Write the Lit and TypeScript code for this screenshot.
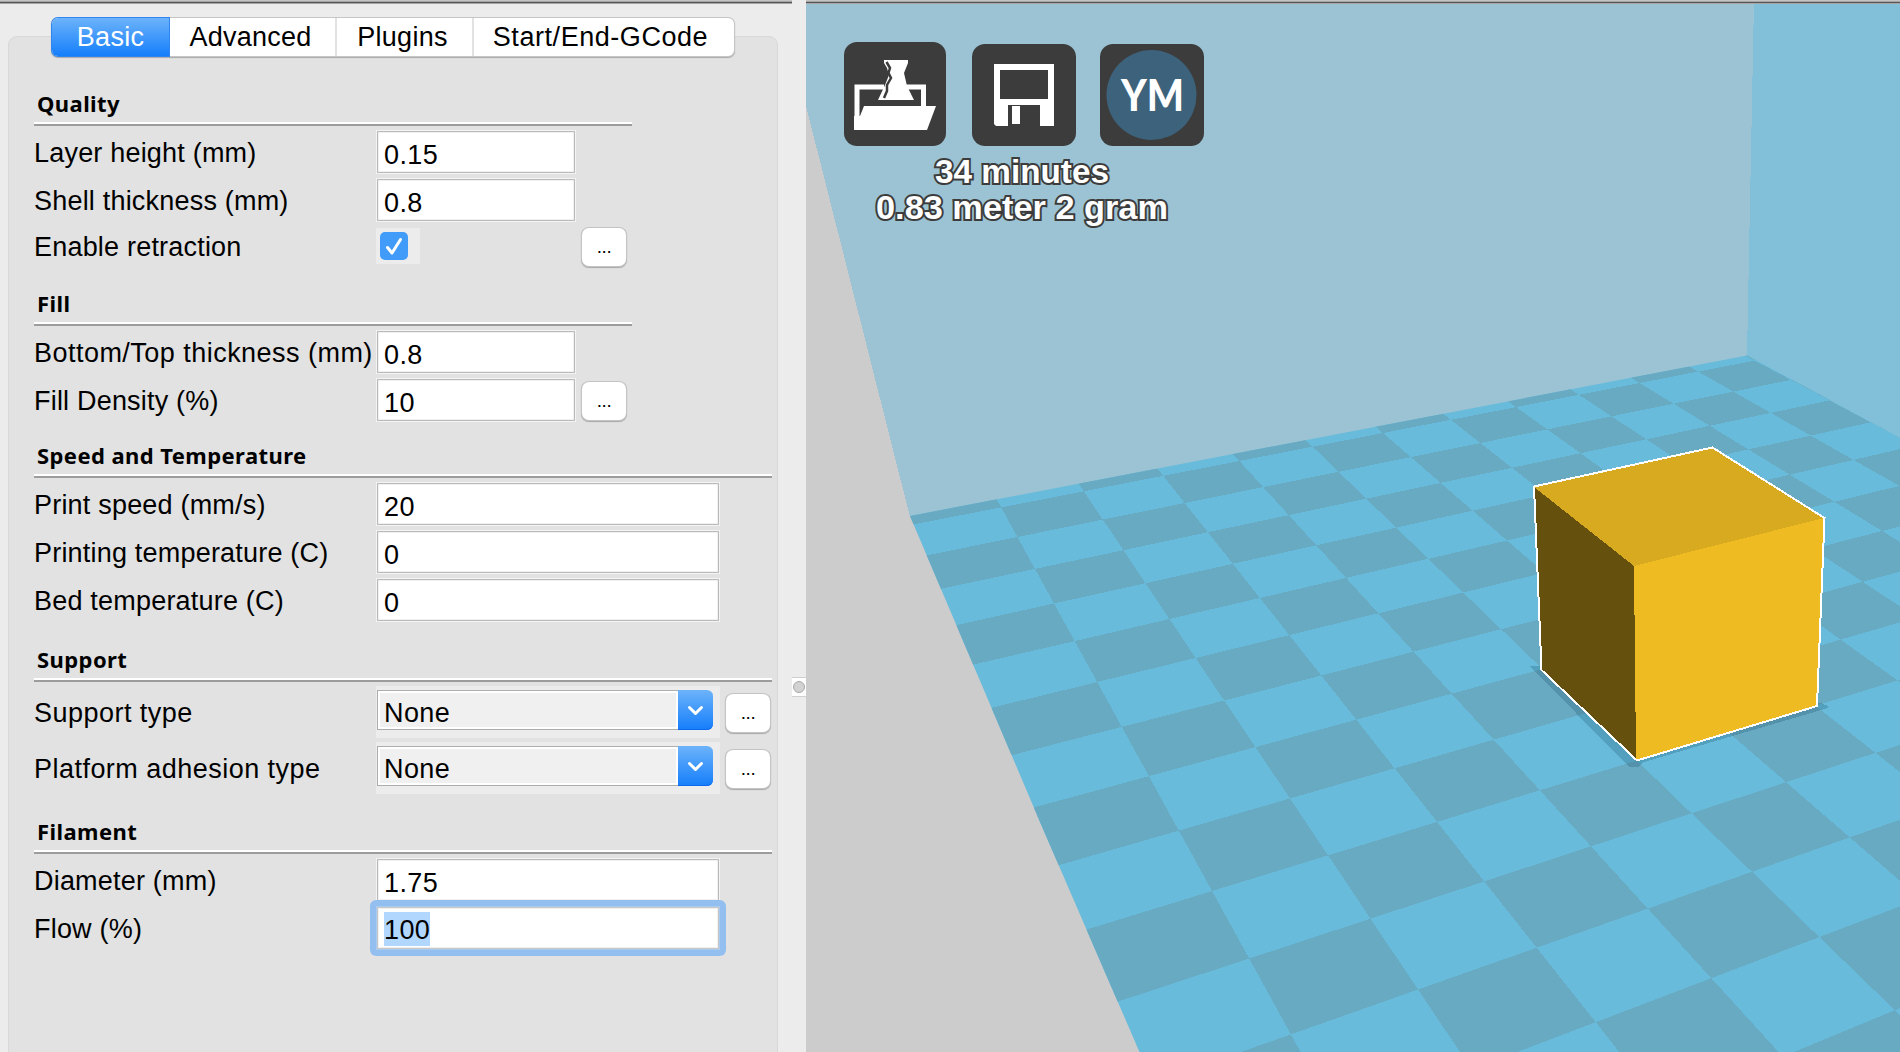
import { LitElement, html, svg, css } from "lit";
import { customElement, property } from "lit/decorators.js";

type Pt = [number, number];

/* Anchors of the build plate: grid column, grid row, viewport x, viewport y. */
const ANCHORS: number[][] = [
  [1, 1, 1001, 507.3], [3, 1, 1163.7, 475.7], [5, 1, 1313.3, 446.7], [7, 1, 1451, 419.3],
  [9, 1, 1578.3, 394.3], [11, 1, 1697.7, 371.7], [11, 3, 1770.7, 413.3], [10, 6, 1833.3, 502],
  [11, 5, 1855, 460.3], [7, 3, 1511.7, 467.7], [1, 4, 1053.3, 604], [3, 5, 1259, 598.7],
  [1, 7, 1121.9, 726.7], [2, 8, 1255.6, 747.3], [1, 9, 1179.9, 830.7], [1, 12, 1289.6, 1034],
  [3, 9, 1395.4, 768.3], [3, 13, 1595.6, 1022.3], [4, 11, 1591.2, 845.7], [5, 12, 1750.8, 872],
  [5, 14, 1895.6, 1010.7], [6, 12, 1849, 837], [7, 11, 1876.4, 752.3], [4, 6, 1379, 613.3],
];

/* Least squares fit of the plane-to-screen projection. */
function fitProjection(points: number[][]): number[] {
  const n = 8;
  const m = Array.from({ length: n }, () => new Array(n + 1).fill(0));
  const add = (row: number[], rhs: number) => {
    for (let a = 0; a < n; a++) {
      for (let b = 0; b < n; b++) m[a][b] += row[a] * row[b];
      m[a][n] += row[a] * rhs;
    }
  };
  for (const [ui, vi, xi, yi] of points) {
    const u = ui / 10, v = vi / 10, x = xi / 1000, y = yi / 1000;
    add([u, v, 1, 0, 0, 0, -u * x, -v * x], x);
    add([0, 0, 0, u, v, 1, -u * y, -v * y], y);
  }
  for (let c = 0; c < n; c++) {
    let p = c;
    for (let r = c + 1; r < n; r++) if (Math.abs(m[r][c]) > Math.abs(m[p][c])) p = r;
    [m[c], m[p]] = [m[p], m[c]];
    for (let r = 0; r < n; r++) {
      if (r === c) continue;
      const f = m[r][c] / m[c][c];
      for (let k = c; k <= n; k++) m[r][k] -= f * m[c][k];
    }
  }
  return m.map((r, i) => r[n] / r[i]);
}

const H = fitProjection(ANCHORS);
const project = (i: number, j: number): Pt => {
  const u = i / 10, v = j / 10;
  const w = H[6] * u + H[7] * v + 1;
  return [(1000 * (H[0] * u + H[1] * v + H[2])) / w, (1000 * (H[3] * u + H[4] * v + H[5])) / w];
};

function darkTiles(): string {
  let d = "";
  for (let i = 0; i < 14; i++) {
    for (let j = 0; j < 16; j++) {
      if ((i + j) % 2) continue;
      /* the outermost column runs on under the plate's clipped edge */
      const left = i === 0 ? -0.2 : i;
      const q = [project(left, j), project(i + 1, j), project(i + 1, j + 1), project(left, j + 1)];
      d += "M" + q.map((p) => p[0].toFixed(1) + " " + p[1].toFixed(1)).join("L") + "Z";
    }
  }
  return d;
}

@customElement("build-view")
class BuildView extends LitElement {
  static styles = css`
    :host { display: grid; overflow: hidden; }
    .scene, .overlay { grid-area: 1 / 1; }
    .scene { display: block; width: 1094px; height: 1052px; }
    .overlay { display: flex; flex-direction: column; align-items: flex-start; padding: 42px 0 0 38px; z-index: 1; }
    .tools { display: flex; align-items: flex-end; }
    .tool { display: block; }
    .first { margin-right: 26px; }
    .second { margin-right: 24px; }
    .stats { display: block; margin-top: 6px; }
    .stat { font: bold 34px "Liberation Sans", Arial, sans-serif; fill: #fff; stroke: #3c3c3c; stroke-width: 4px; paint-order: stroke; stroke-linejoin: miter; stroke-miterlimit: 2; }
    .logo { font: 900 43.5px Lato, sans-serif; fill: #fff; }
  `;
  render() {
    return html`
      <svg class="scene" viewBox="806 0 1094 1052" shape-rendering="crispEdges">
        <defs><clipPath id="plate"><path d="M910 516L1747 355.5L1900 438V1052H1139.5L1040 822Z"/></clipPath></defs>
        <path fill="#cccccc" d="M806 0H1900V1052H806Z"/>
        <path fill="#9bc3d3" d="M806 0H1754L1747 356L910 517L806 106Z"/>
        <path fill="#82c0d9" d="M1754 0H1900V439L1747 356Z"/>
        <g clip-path="url(#plate)">
          <path fill="#68bbda" d="M806 300H1900V1052H806Z"/>
          ${svg`<path fill="#69aac3" d=${darkTiles()}/>`}
        </g>
        <path fill="#003050" fill-opacity=".2" d="M1530 666H1542L1638 756L1818 702L1828 706V708L1644 762L1638 767H1629L1622 760Z"/>
        <path fill="#d7aa20" d="M1534 487L1712.5 448L1824 518L1634 566Z"/>
        <path fill="#65500e" d="M1534 487L1634 566L1636 760L1541.5 670Z"/>
        <path fill="#eebb22" d="M1634 566L1824 518L1817 706L1636 760Z"/>
        <path fill="none" stroke="#fff" stroke-width="2" d="M1534 486.5L1712.5 447.5L1824.5 518L1817 706L1637 760.5L1541.5 670Z"/>
        <path fill="#c4c4c4" d="M806 0H1900V1H806Z"/>
        <path fill="#a6a6a6" d="M806 1H1900V4H806Z"/>
        <path fill="#555555" d="M806 2H1900V3H806Z"/>
      </svg>
      <div class="overlay">
        <div class="tools">
          <svg class="tool first" width="102" height="104" viewBox="0 0 102 104">
            <rect width="102" height="104" rx="13" fill="#3c3c3c"/>
            <path fill="none" stroke="#fff" stroke-width="5" d="M13 80V45H79.500V66"/>
            <path fill="#3c3c3c" d="M40 42H62V48H40Z"/>
            <path fill="#fff" d="M40 18H64V21L60 31L63 44L70 58H34L41 43L45 33L43 26L40 21Z"/>
            <path fill="none" stroke="#3c3c3c" stroke-width="2.500" d="M42.500 20L46 26L44.500 31L47 36L43 43L43 49L40 56"/>
            <path fill="#fff" d="M20 64H92L83 88H10V74H16Z"/>
          </svg>
          <svg class="tool second" width="104" height="102" viewBox="0 0 104 102">
            <rect width="104" height="102" rx="13" fill="#3c3c3c"/>
            <path fill="#fff" fill-rule="evenodd" d="M22 20H82V82H68V61H36V82H24L22 80ZM28 26V55H76V26Z"/>
            <path fill="#fff" d="M40 62H48V80H40Z"/>
          </svg>
          <svg class="tool" width="104" height="102" viewBox="0 0 104 102">
            <rect width="104" height="102" rx="13" fill="#3c3c3c"/>
            <circle cx="51.500" cy="51" r="45" fill="#3d627b"/>
            <text class="logo" x="21" y="67" textLength="63" lengthAdjust="spacingAndGlyphs">YM</text>
          </svg>
        </div>
        <svg class="stats" width="360" height="90" viewBox="844 152 360 90">
          <text class="stat" x="935" y="182.500" textLength="174" lengthAdjust="spacingAndGlyphs">34 minutes</text>
          <text class="stat" x="876" y="219" textLength="292" lengthAdjust="spacingAndGlyphs">0.83 meter 2 gram</text>
        </svg>
      </div>`;
  }
}

type Row = { label: string; kind: "text" | "check" | "combo"; value?: string; more?: boolean; focus?: boolean; loose?: boolean };

@customElement("settings-section")
class SettingsSection extends LitElement {
  @property() heading = "";
  @property({ attribute: false }) rows: Row[] = [];
  static styles = css`
    :host { display: block; }
    .heading { box-sizing: border-box; display: flex; align-items: flex-end; height: 34px; padding: 0 0 4px 3px; font: bold 22px/30px "Noto Sans", "Open Sans", sans-serif; letter-spacing: 0.42px; }
    .rule { height: 2px; background: #9c9c9c; border-top: 2px solid #fff; }
    .rows { display: grid; gap: 4px; padding-top: 4px; }
    .row { display: grid; grid-template-columns: 342px var(--field) auto; height: 44px; align-items: center; letter-spacing: 0.4px; }
    .row.check { height: 40px; }
    .row.combo { height: 52px; }
    .label { padding: 2px 0 0 0; white-space: nowrap; letter-spacing: 0.2px; }
    .label.loose { letter-spacing: 0.47px; }
    .field { box-sizing: border-box; height: 44px; border: 1px solid #f4f4f4; display: flex; }
    .inner { box-sizing: border-box; flex: 1; border: 1px solid #bababa; background: #fff; box-shadow: inset 0 0 0 1px #f0f0f0; padding: 5px 0 0 6px; line-height: 36px; }
    .focus { position: relative; border-color: #a8cbf2; box-shadow: 0 0 0 6px #92bef0; border-radius: 2px; }
    .focus .inner { border-color: #c6c6c6; }
    .sel { display: inline-block; height: 34px; line-height: 36px; margin-top: -1px; background: #b2d7fe; vertical-align: top; }
    .checkbg { box-sizing: border-box; width: 44px; height: 36px; background: #ececec; padding: 4px; }
    .icon { display: block; }
    .combobg { box-sizing: border-box; height: 52px; background: #ececec; padding: 4px 7px 8px 1px; display: flex; }
    .combo-text { box-sizing: border-box; flex: 1; border: 1px solid #adadad; border-right: 0; background: #f0f0f0; box-shadow: inset 0 0 0 2px #fff; padding: 3px 0 0 6px; line-height: 38px; }
    .drop { width: 35px; height: 40px; border-radius: 0 6px 6px 0; background: linear-gradient(#6cb3fa, #157efb); box-shadow: inset 0 -1px 0 #0d68f0; }
    .more { box-sizing: border-box; width: 44px; height: 38px; margin: 2px 0 0 6px; border-radius: 7px; background: #fff; box-shadow: 0 0 0 1px #c4c4c4, 0 1px 1px 1px #a8a8a8; text-align: center; font-size: 19px; line-height: 37px; letter-spacing: -0.5px; }
  `;
  private control(r: Row) {
    if (r.kind === "check")
      return html`<div class="checkbg"><svg class="icon" width="28" height="28"><rect width="28" height="28" rx="5" fill="#419bf9"/><path d="M7.500 15.500L12 21L20.500 7.500" fill="none" stroke="#fff" stroke-width="3" stroke-linecap="round" stroke-linejoin="round"/></svg></div>`;
    if (r.kind === "combo")
      return html`<div class="combobg"><div class="combo-text">${r.value}</div><div class="drop"><svg class="icon" width="35" height="40"><path d="M11.500 17.500L17.500 23.500L23.500 17.500" fill="none" stroke="#fff" stroke-width="3" stroke-linecap="round" stroke-linejoin="round"/></svg></div></div>`;
    return html`<div class="field ${r.focus ? "focus" : ""}"><div class="inner">${r.focus ? html`<span class="sel">${r.value}</span>` : r.value}</div></div>`;
  }
  render() {
    return html`
      <div class="heading">${this.heading}</div>
      <div class="rule"></div>
      <div class="rows">
        ${this.rows.map((r) => html`<div class="row ${r.kind}"><div class="label ${r.loose ? "loose" : ""}">${r.label}</div>${this.control(r)}${r.more ? html`<div class="more">...</div>` : ""}</div>`)}
      </div>`;
  }
}

const SECTIONS: { name: string; cls: string; rows: Row[] }[] = [
  { name: "Quality", cls: "narrow", rows: [
    { label: "Layer height (mm)", kind: "text", value: "0.15" },
    { label: "Shell thickness (mm)", kind: "text", value: "0.8" },
    { label: "Enable retraction", kind: "check", more: true } ] },
  { name: "Fill", cls: "narrow spaced", rows: [
    { label: "Bottom/Top thickness (mm)", kind: "text", value: "0.8", loose: true },
    { label: "Fill Density (%)", kind: "text", value: "10", more: true } ] },
  { name: "Speed and Temperature", cls: "wide tight", rows: [
    { label: "Print speed (mm/s)", kind: "text", value: "20" },
    { label: "Printing temperature (C)", kind: "text", value: "0" },
    { label: "Bed temperature (C)", kind: "text", value: "0" } ] },
  { name: "Support", cls: "wide spaced", rows: [
    { label: "Support type", kind: "combo", value: "None", more: true, loose: true },
    { label: "Platform adhesion type", kind: "combo", value: "None", more: true, loose: true } ] },
  { name: "Filament", cls: "wide spaced", rows: [
    { label: "Diameter (mm)", kind: "text", value: "1.75" },
    { label: "Flow (%)", kind: "text", value: "100", focus: true } ] },
];

@customElement("app-root")
class AppRoot extends LitElement {
  static styles = css`
    :host { display: grid; grid-template-columns: 792px 14px 1094px; width: 1900px; height: 1052px; overflow: hidden; background: #ececec; color: #000; font: 27px "Liberation Sans", Arial, sans-serif; }
    .panel { height: 1052px; overflow: hidden; }
    .shade { height: 4px; background: linear-gradient(#c4c4c4 1px, #a6a6a6 1px 2px, #555 2px 3px, #a6a6a6 3px); }
    .tabs { position: relative; z-index: 1; display: flex; width: 682px; height: 38px; margin: 14px 0 0 52px; border-radius: 6px; background: #fff; box-shadow: 0 0 0 1px #c6c6c6, 0 1px 1px 1px #a9a9a9; line-height: 38px; letter-spacing: 0.25px; }
    .tab { box-sizing: border-box; text-align: center; border-left: 2px solid #e2e2e2; white-space: nowrap; }
    .tab.on { border: 0; border-radius: 6px 0 0 6px; color: #fff; background: linear-gradient(#6cb3fa, #157efb); box-shadow: 0 0 0 1px #2f86f0; width: 117px; }
    .adv { width: 166px; padding-right: 3px; border-left: 0; }
    .plug { width: 137px; padding-right: 4px; }
    .code { width: 262px; padding-right: 7px; letter-spacing: 0.55px; }
    .box { box-sizing: border-box; width: 770px; height: 1040px; margin: -20px 0 0 8px; padding: 51px 0 0 25px; border: 1px solid #d8d8d8; border-radius: 9px; background: #e2e2e2; }
    .narrow { width: 598px; --field: 200px; }
    .wide { width: 738px; --field: 344px; }
    .spaced { margin-top: 22px; }
    .tight { margin-top: 18px; }
    .sash { padding-top: 677px; }
    .knob { display: block; }
  `;
  render() {
    return html`
      <div class="panel">
        <div class="shade"></div>
        <div class="tabs"><div class="tab on">Basic</div><div class="tab adv">Advanced</div><div class="tab plug">Plugins</div><div class="tab code">Start/End-GCode</div></div>
        <div class="box">
          ${SECTIONS.map((s) => html`<settings-section class=${s.cls} .heading=${s.name} .rows=${s.rows}></settings-section>`)}
        </div>
      </div>
      <div class="sash"><svg class="knob" width="14" height="20"><rect width="14" height="20" fill="#fff"/><path d="M0 .5H14M0 19.500H14" stroke="#d0d0d0"/><circle cx="7" cy="10" r="5.500" fill="#d2d2d2" stroke="#a8a8a8"/></svg></div>
      <build-view></build-view>`;
  }
}
